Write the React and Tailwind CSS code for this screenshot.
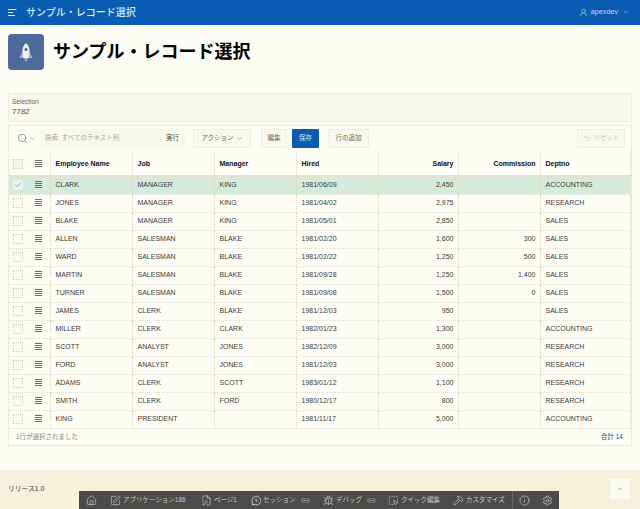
import React from "react";
import { UserRound, ChevronDown, ChevronUp, Search, Check, Home, SquarePen, FilePen, Bug, SquareDashedMousePointer, Hammer, Info, Settings, Undo2, Link2 } from "lucide-react";

const rows = [
  ["CLARK","MANAGER","KING","1981/06/09","2,450","","ACCOUNTING"],
  ["JONES","MANAGER","KING","1981/04/02","2,975","","RESEARCH"],
  ["BLAKE","MANAGER","KING","1981/05/01","2,850","","SALES"],
  ["ALLEN","SALESMAN","BLAKE","1981/02/20","1,600","300","SALES"],
  ["WARD","SALESMAN","BLAKE","1981/02/22","1,250","500","SALES"],
  ["MARTIN","SALESMAN","BLAKE","1981/09/28","1,250","1,400","SALES"],
  ["TURNER","SALESMAN","BLAKE","1981/09/08","1,500","0","SALES"],
  ["JAMES","CLERK","BLAKE","1981/12/03","950","","SALES"],
  ["MILLER","CLERK","CLARK","1982/01/23","1,300","","ACCOUNTING"],
  ["SCOTT","ANALYST","JONES","1982/12/09","3,000","","RESEARCH"],
  ["FORD","ANALYST","JONES","1981/12/03","3,000","","RESEARCH"],
  ["ADAMS","CLERK","SCOTT","1983/01/12","1,100","","RESEARCH"],
  ["SMITH","CLERK","FORD","1980/12/17","800","","RESEARCH"],
  ["KING","PRESIDENT","","1981/11/17","5,000","","ACCOUNTING"],
];

const Btn = ({ children, className = "" }) => (
  <div className={`h-[19px] flex items-center justify-center border border-dotted border-[#e6e6d2] bg-[#f8f8ec] text-[6.5px] text-[#6a6a66] ${className}`}>{children}</div>
);

const NavIcon = () => (
  <svg width="9" height="7" viewBox="0 0 9 7" className="text-[#dbe8f5]" stroke="currentColor" strokeWidth="1" fill="none">
    <path d="M0 .5h8.5M0 3.5h5M0 6.5h7" />
  </svg>
);

const RowIcon = () => (
  <svg width="7" height="7" viewBox="0 0 7 7" className="block mx-auto -mt-[1px] text-[#6a6a6a]" stroke="currentColor" strokeWidth="1" fill="none">
    <path d="M0 .5h7M0 2.500h7M0 4.500h7M0 6.500h7" />
  </svg>
);

const RocketIcon = () => (
  <svg width="16" height="20" viewBox="0 0 16 20">
    <path d="M4.5 10 1.5 16h3.5zM11.5 10l3 6H11z" fill="#a9b6cf" />
    <path d="M8 1c2.4 2 3.6 5 3.6 8 0 3-.5 5.5-1.2 7.5H5.600C4.900 14.500 4.400 12 4.400 9 4.400 6 5.600 3 8 1z" fill="#f2f2f2" />
    <circle cx="8" cy="7.500" r="1.500" fill="#4a5f8c" />
    <path d="M6.500 17.500h3L8 19.500z" fill="#c9d2e2" />
  </svg>
);

const SessionIcon = ({ size, className }) => (
  <svg width={size} height={size} viewBox="0 0 12 12" className={className} fill="none" stroke="currentColor" strokeWidth="1">
    <path d="M2 10.500l.8-1.900A4.800 4.800 0 1 1 4.400 10.200z" />
    <path d="M6.500 3.500v3h2" />
  </svg>
);

const DevItem = ({ icon: I, label, extra, w }) => (
  <div className={`flex items-center gap-[2px] ${w}`}>
    <I size={11} strokeWidth={1.4} className="text-[#cfcfcf] shrink-0" />
    {label && <span className="text-[6.5px] text-[#c8c8c8] whitespace-nowrap">{label}</span>}
    {extra && <Link2 size={9} strokeWidth={1.5} className="text-[#cfcfcf] ml-[3px]" />}
  </div>
);

const cell = "border-r border-dotted border-[#d9d9c6]";

export default function App() {
  return (
    <div className="relative h-[509px] w-[640px] overflow-hidden flex flex-col bg-[#fdfdf5] text-[#333333]" style={{ fontFamily: '"Liberation Sans", "Noto Sans CJK JP", sans-serif' }}>
      <header className="h-[25px] bg-[#0a5cb2] flex items-center pl-[8px] pr-[10px] text-white shrink-0">
        <div className="mr-[9px] flex"><NavIcon /></div>
        <span className="text-[10px] font-medium text-[#dbe8f5]">サンプル・レコード選択</span>
        <div className="ml-auto flex items-center gap-[3px] text-[#c5d8ee]">
          <UserRound size={9} strokeWidth={1.5} />
          <span className="text-[7.2px] mr-[1px]">apexdev</span>
          <ChevronDown size={8} strokeWidth={1.5} />
        </div>
      </header>

      <section className="h-[62px] flex items-start pl-[8px] pt-[9px] shrink-0">
        <div className="w-[36px] h-[36px] rounded-[4px] bg-[#4e6a9c] flex items-center justify-center">
          <RocketIcon />
        </div>
        <h1 className="ml-[9px] mt-[9px] text-[18px] font-bold text-black leading-none">サンプル・レコード選択</h1>
      </section>

      <main className="flex-1 px-[8px] pt-[6px] flex flex-col">
        <div className="h-[29px] bg-[#f8f8ec] border border-dotted border-[#e6e6d2] px-[3px] pt-[4px]">
          <div className="text-[6.5px] leading-[8px] text-[#666]">Selection</div>
          <div className="text-[8px] leading-[11px] text-[#555]">7782</div>
        </div>
        <div className="mt-[3px] h-[321px] border border-dotted border-[#d9d9c6] flex flex-col">
          <div className="h-[24px] mb-[3px] flex items-center pl-[4px] pr-[6px] shrink-0">
            <div className="flex items-center w-[27px] text-[#666] pl-[4px]">
              <Search size={11} strokeWidth={1.4} />
              <ChevronDown size={7} strokeWidth={1.5} className="ml-[1px]" />
            </div>
            <div className="w-[120px] h-[19px] bg-[#f8f8ec] flex items-center px-[5px] text-[6.5px] text-[#a8a8a4]">検索: すべてのテキスト列</div>
            <div className="w-[25px] h-[19px] bg-[#f8f8ec] flex items-center justify-center text-[6.5px] text-[#444]">実行</div>
            <Btn className="ml-[8px] w-[58px] gap-[2px]">アクション<ChevronDown size={7} strokeWidth={1.5} /></Btn>
            <Btn className="ml-[10px] w-[26px]">編集</Btn>
            <div className="ml-[5px] w-[27px] h-[19px] flex items-center justify-center rounded-[1px] bg-[#0a5cb2] text-[6.5px] text-[#dbe8f5]">保存</div>
            <Btn className="ml-[9px] w-[41px]">行の追加</Btn>
            <Btn className="ml-auto w-[48px] gap-[3px] text-[#c4c4bc]"><Undo2 size={8} strokeWidth={1.5} />リセット</Btn>
          </div>

          <table className="w-[621px] table-fixed border-collapse text-[7px]">
            <colgroup>
              <col className="w-[18px]" /><col className="w-[23px]" /><col className="w-[82px]" /><col className="w-[82px]" />
              <col className="w-[82px]" /><col className="w-[82px]" /><col className="w-[80px]" /><col className="w-[82px]" /><col className="w-[90px]" />
            </colgroup>
            <thead>
              <tr className="h-[23px] border-b-2 border-[#e2e2ce] text-left text-[#111] font-bold">
                <th className="p-0"><div className="mx-auto w-[10px] h-[10px] border border-dotted border-[#cfcfc6] bg-[#f4f4ee]" /></th>
                <th className={`p-0 ${cell}`}><RowIcon /></th>
                {["Employee Name","Job","Manager","Hired"].map(h => <th key={h} className={`px-[5px] ${cell}`}>{h}</th>)}
                <th className={`px-[4px] text-right ${cell}`}>Salary</th>
                <th className={`px-[4px] text-right ${cell}`}>Commission</th>
                <th className={`px-[5px] ${cell}`}>Deptno</th>
              </tr>
            </thead>
            <tbody>
              {rows.map((r, i) => (
                <tr key={r[0]} className={`h-[18px] border-b border-dotted border-[#dfdfcc] text-[#3a3a3a] ${i === 0 ? "bg-[#d4eadc]" : ""}`}>
                  <td className="p-0">
                    <div className={`mx-auto w-[10px] h-[10px] border border-dotted flex items-center justify-center ${i === 0 ? "border-[#e8f0ee] bg-[#e8f2ee]" : "border-[#cfcfc6] bg-[#fbfbf2]"}`}>
                      {i === 0 && <Check size={8} strokeWidth={1.5} className="text-[#5a6f8a]" />}
                    </div>
                  </td>
                  <td className={`p-0 ${cell}`}><RowIcon /></td>
                  <td className={`px-[5px] ${cell}`}>{r[0]}</td>
                  <td className={`px-[5px] ${cell}`}>{r[1]}</td>
                  <td className={`px-[5px] ${cell}`}>{r[2]}</td>
                  <td className={`px-[5px] ${cell}`}>{r[3]}</td>
                  <td className={`px-[4px] text-right ${cell}`}>{r[4]}</td>
                  <td className={`px-[4px] text-right ${cell}`}>{r[5]}</td>
                  <td className={`px-[5px] ${cell}`}>{r[6]}</td>
                </tr>
              ))}
            </tbody>
          </table>

          <div className="flex-1 flex items-center justify-between pl-[7px] pr-[8px] text-[6.5px]">
            <span className="text-[#888884]">1行が選択されました</span>
            <span className="text-[#444]">合計 14</span>
          </div>
        </div>
        <div className="h-[24px] shrink-0" />
      </main>

      <footer className="h-[39px] bg-[#f3f3dc] flex items-center pl-[8px] shrink-0">
        <span className="text-[6.8px] text-[#333]">リリース1.0</span>
        <div className="ml-auto mr-[10px] w-[20px] h-[20px] bg-[#fbfbf0] flex items-center justify-center -mt-[1px]">
          <ChevronUp size={8} strokeWidth={1.5} className="text-[#777]" />
        </div>
      </footer>

      <nav className="absolute left-[79px] bottom-0 w-[480px] h-[18px] bg-[#4b4b49] flex items-center pl-[7px]">
        <DevItem icon={Home} w="w-[24px]" />
        <DevItem icon={SquarePen} label="アプリケーション186" w="w-[91px]" />
        <DevItem icon={FilePen} label="ページ1" w="w-[49px]" />
        <DevItem icon={SessionIcon} label="セッション" extra w="w-[73px]" />
        <DevItem icon={Bug} label="デバッグ" extra w="w-[65px]" />
        <DevItem icon={SquareDashedMousePointer} label="クイック編集" w="w-[65px]" />
        <DevItem icon={Hammer} label="カスタマイズ" w="w-[59px]" />
        <div className="w-px h-full bg-[#666] mr-[6px]" />
        <DevItem icon={Info} w="w-[23px]" />
        <DevItem icon={Settings} w="w-[12px]" />
      </nav>
    </div>
  );
}
